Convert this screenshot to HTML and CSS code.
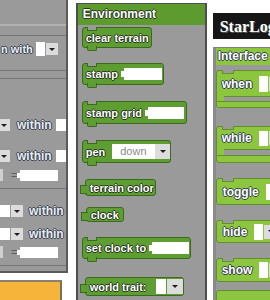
FILE: index.html
```html
<!DOCTYPE html>
<html>
<head>
<meta charset="utf-8">
<link rel="stylesheet" href="styles.css">
</head>
<body>
<div class="stage">
  <div class="left">
    <div class="lpanel">
      <div class="ltop"></div>
      <div class="lsep s1"></div>
      <div class="lrow r1">
        <div class="clip"><span class="ltxt small">n with</span></div>
        <span class="lbox w9"></span><span class="lbtn b12"><i class="tri"></i></span>
      </div>
      <div class="lsep s2"></div>
      <div class="lsep s3"></div>
      <div class="lrow r2">
        <span class="lbtn b10"><i class="tri"></i></span>
        <span class="ltxt m7">within</span>
        <span class="lbox w10 m4"></span>
      </div>
      <div class="lrow r3">
        <span class="lbtn b10"><i class="tri"></i></span>
        <span class="ltxt m7">within</span>
        <span class="lbox w10 m4"></span>
      </div>
      <div class="lrow r4">
        <span class="lbit"></span>
        <span class="leq">=</span>
        <span class="linp"></span>
      </div>
      <div class="lsep s4"></div>
      <div class="lrow r5">
        <span class="lbox w10"></span><span class="lbtn b12"><i class="tri"></i></span>
        <span class="ltxt m6">within</span>
      </div>
      <div class="lrow r6">
        <span class="lbox w10"></span><span class="lbtn b12"><i class="tri"></i></span>
        <span class="ltxt m6">within</span>
      </div>
      <div class="lrow r7">
        <span class="lbit"></span>
        <span class="leq">=</span>
        <span class="linp"></span>
      </div>
      <div class="lsep s5"></div>
    </div>
    <div class="orange"></div>
  </div>

  <div class="mid">
    <div class="mpanel">
      <div class="mhead">Environment</div>
      <div class="mlist">
        <div class="blk stmt b-clear"><span class="t">clear terrain</span></div>
        <div class="blk stmt b-stamp"><span class="t">stamp</span><span class="inp w38"></span></div>
        <div class="blk stmt b-grid"><span class="t">stamp grid</span><span class="inp w36"></span></div>
        <div class="blk stmt b-pen"><span class="t">pen</span><span class="sel">down</span><span class="btn"><i class="tri"></i></span></div>
        <div class="blk rep b-tcolor"><span class="t">terrain color</span></div>
        <div class="blk rep b-clock"><span class="t">clock</span></div>
        <div class="blk stmt b-setclock"><span class="t">set clock to</span><span class="inp w37"></span></div>
        <div class="blk rep b-trait"><span class="t">world trait:</span><span class="wsel"></span><span class="btn b16"><i class="tri"></i></span></div>
      </div>
    </div>
  </div>

  <div class="right">
    <div class="rhead">StarLogo</div>
    <div class="rpanel">
      <div class="rtitle">Interface</div>
      <div class="rlist">
        <div class="cblk c-when">
          <div class="ctop h26"><span class="t">when</span><span class="rbox h16"></span><span class="rbtn"><i class="tri"></i></span></div>
          <div class="cgap g5"></div>
          <div class="cbot h7"></div>
        </div>
        <div class="cblk c-while">
          <div class="ctop h23"><span class="t">while</span><span class="rbox h15"></span><span class="rbtn"><i class="tri"></i></span></div>
          <div class="cgap g6"></div>
          <div class="cbot h8"></div>
        </div>
        <div class="rblk r-toggle"><span class="t">toggle</span><span class="rbox h16"></span><span class="rbtn"><i class="tri"></i></span></div>
        <div class="rblk r-hide"><span class="t">hide</span><span class="rbox h16"></span><span class="rbtn"><i class="tri"></i></span></div>
        <div class="rblk r-show"><span class="t">show</span><span class="rbox h16"></span><span class="rbtn"><i class="tri"></i></span></div>
        <div class="rblk r-next"></div>
      </div>
    </div>
  </div>
</div>
</body>
</html>
```

FILE: styles.css
```css
* { box-sizing: border-box; }
html, body { margin: 0; padding: 0; background: #fff; }
body { font-family: "Liberation Sans", Arial, sans-serif; }

.stage {
  display: flex;
  align-items: flex-start;
  width: 270px;
  height: 300px;
  overflow: hidden;
}

.tri {
  display: block;
  width: 0;
  height: 0;
  border-left: 3px solid transparent;
  border-right: 3px solid transparent;
  border-top: 3px solid #1e1e1e;
}

/* ---------- left column ---------- */
.left {
  flex: 0 0 62px;
  display: flex;
  flex-direction: column;
}
.lpanel {
  height: 273px;
  background: #9a9a9a;
  border-right: 2px solid #5a5a5a;
  border-bottom: 2px solid #5a5a5a;
  display: flex;
  flex-direction: column;
  overflow: hidden;
}
.ltop { height: 26px; border-bottom: 2px solid #b2b2b2; flex: none; }
.lsep { height: 1px; background: #767676; flex: none; }
.s1 { margin-top: 9px; }
.s2 { margin-top: 14px; }
.s3 { margin-top: 7px; }
.s4 { margin-top: 7px; }
.s5 { margin-top: 7px; }

.lrow {
  display: flex;
  align-items: center;
  height: 12px;
  flex: none;
}
.r1 { margin-top: 6px; height: 14px; }
.r2 { margin-top: 40px; }
.r3 { margin-top: 19px; }
.r4 { margin-top: 7px; }
.r5 { margin-top: 16px; }
.r6 { margin-top: 11px; }
.r7 { margin-top: 6px; }

.clip {
  width: 33px;
  padding-left: 1px;
  display: flex;
  justify-content: flex-start;
  white-space: nowrap;
  flex: none;
}
.ltxt {
  font-size: 12px;
  font-weight: bold;
  color: #e9eef6;
  white-space: nowrap;
  line-height: 12px;
  text-shadow: 1px 0 0 #3c4350, -1px 0 0 #3c4350, 0 1px 0 #3c4350, 0 -1px 0 #3c4350;
}
.ltxt.small { font-size: 11px; }
.m7 { margin-left: 7px; }
.m6 { margin-left: 6px; }
.m4 { margin-left: 4px; }
.lbox { background: #fff; height: 14px; flex: none; }
.r1 .lbox { margin-left: 3px; }
.w9 { width: 9px; }
.w10 { width: 10px; height: 12px; }
.lbtn {
  background: #dcdcdc;
  height: 12px;
  display: flex;
  align-items: center;
  justify-content: center;
  flex: none;
  margin-left: 1px;
}
.b10 { width: 10px; margin-left: 0; justify-content: flex-start; padding-left: 1px; }
.b12 { width: 12px; }
.lbit { width: 3px; height: 12px; background: #cfcfcf; flex: none; }
.leq { margin-left: 8px; font-size: 11px; color: #5d5d5d; line-height: 12px; width: 5px; }
.linp { margin-left: 4px; width: 38px; height: 11px; background: #fff; position: relative; }
.linp::before {
  content: "";
  position: absolute;
  left: -3px;
  top: 3px;
  width: 3px;
  height: 5px;
  background: #fff;
}

.orange {
  margin-top: 7px;
  width: 62px;
  height: 22px;
  background: #f6b43a;
  border-top: 2px solid #8c8070;
  border-right: 2px solid #7a7060;
}

/* ---------- middle column ---------- */
.mid {
  flex: 0 0 131px;
  margin-left: 8px;
}
.mpanel {
  margin-top: 3px;
  height: 297px;
  background: #9a9a9a;
  border-left: 2px solid #4e4e4e;
  border-right: 2px solid #4e4e4e;
  border-top: 1px solid #4e4e4e;
}
.mhead {
  height: 21px;
  background: #5d9b2f;
  color: #fff;
  font-size: 12px;
  font-weight: bold;
  line-height: 21px;
  padding-left: 5px;
  text-shadow: 1px 0 0 #27361c, -1px 0 0 #27361c, 0 1px 0 #27361c, 0 -1px 0 #27361c;
}
.mlist {
  display: flex;
  flex-direction: column;
  align-items: flex-start;
  padding-left: 4px;
}
.blk {
  position: relative;
  display: flex;
  align-items: center;
  background: #5e9d31;
  border: 1px solid #3b6a1e;
  border-radius: 3px;
  padding: 0 1px 0 3px;
  flex: none;
}
.blk .t, .rblk .t, .ctop .t {
  font-size: 11px;
  font-weight: bold;
  color: #fff;
  white-space: nowrap;
  line-height: 12px;
  text-shadow: 1px 0 0 #25331b, -1px 0 0 #25331b, 0 1px 0 #25331b, 0 -1px 0 #25331b;
}
.stmt::before {
  content: "";
  position: absolute;
  top: -1px;
  left: 4px;
  width: 8px;
  height: 3px;
  background: #9a9a9a;
  border: 1px solid #3b6a1e;
  border-top: none;
}
.stmt::after {
  content: "";
  position: absolute;
  bottom: -4px;
  left: 4px;
  width: 8px;
  height: 4px;
  background: #5e9d31;
  border: 1px solid #3b6a1e;
  border-top: none;
  border-radius: 0 0 2px 2px;
}
.rep { padding-left: 4px; }
.rep::before {
  content: "";
  position: absolute;
  left: -6px;
  top: 50%;
  margin-top: -3px;
  width: 6px;
  height: 7px;
  background: #5e9d31;
  border: 1px solid #3b6a1e;
  border-right: none;
}

.b-clear { margin-top: 2px; height: 21px; padding-right: 2px; }
.b-stamp { margin-top: 15px; height: 22px; }
.b-grid { margin-top: 16px; height: 23px; padding-right: 2px; }
.b-pen { margin-top: 16px; height: 23px; padding-right: 0; }
.b-tcolor { margin-top: 16px; height: 17px; margin-left: 3px; padding-right: 1px; }
.b-clock { margin-top: 11px; height: 15px; margin-left: 4px; padding-right: 4px; }
.b-setclock { margin-top: 15px; height: 22px; padding-right: 1px; }
.b-trait { margin-top: 18px; height: 19px; margin-left: 3px; padding-right: 0; }

.inp {
  position: relative;
  margin-left: 6px;
  height: 12px;
  background: #fff;
  flex: none;
}
.inp::before {
  content: "";
  position: absolute;
  left: -3px;
  top: 3px;
  width: 3px;
  height: 6px;
  background: #fff;
}
.w38 { width: 38px; }
.w36 { width: 36px; }
.w37 { width: 37px; }
.sel {
  margin-left: 7px;
  width: 43px;
  height: 15px;
  background: #fff;
  font-size: 11px;
  line-height: 15px;
  color: #8a8a8a;
  padding-left: 8px;
  flex: none;
}
.btn {
  width: 15px;
  height: 15px;
  background: #dcdcdc;
  display: flex;
  align-items: center;
  justify-content: center;
  flex: none;
}
.b16 { width: 16px; margin-left: 1px; }
.wsel { margin-left: 9px; width: 10px; height: 15px; background: #fff; flex: none; }

/* ---------- right column ---------- */
.right {
  flex: 0 0 200px;
  margin-left: 6px;
}
.rhead {
  margin-top: 13px;
  height: 26px;
  background: #161616;
  color: #fff;
  font-family: "Liberation Serif", "Times New Roman", serif;
  font-size: 16px;
  font-weight: bold;
  line-height: 27px;
  padding-left: 7px;
  white-space: nowrap;
  text-shadow: 1px 1px 0 #555;
}
.rpanel {
  margin-top: 8px;
  height: 260px;
  background: #9a9a9a;
  border-left: 3px solid #8a8a8a;
  border-top: 1px solid #7c7c7c;
}
.rtitle {
  height: 17px;
  background: #8cc63f;
  color: #fff;
  font-size: 12px;
  font-weight: bold;
  line-height: 17px;
  padding-left: 2px;
  text-shadow: 1px 0 0 #34404a, -1px 0 0 #34404a, 0 1px 0 #34404a, 0 -1px 0 #34404a;
}
.rlist {
  display: flex;
  flex-direction: column;
}
.rlist .t {
  font-size: 12px !important;
  text-shadow: 1px 0 0 #34404a, -1px 0 0 #34404a, 0 1px 0 #34404a, 0 -1px 0 #34404a !important;
}
.cblk { display: flex; flex-direction: column; width: 120px; flex: none; }
.ctop, .rblk {
  position: relative;
  display: flex;
  align-items: center;
  background: #8cc63f;
  border: 1px solid #62902e;
  padding-left: 5px;
  width: 120px;
  flex: none;
}
.ctop { border-radius: 3px 0 0 0; border-bottom: none; }
.rblk { border-radius: 3px; }
.ctop::before, .rblk::before {
  content: "";
  position: absolute;
  top: -1px;
  left: 5px;
  width: 10px;
  height: 3px;
  background: #9a9a9a;
  border: 1px solid #62902e;
  border-top: none;
}
.r-next::before { display: none; }
.cgap {
  border-left: 8px solid #8cc63f;
  position: relative;
}
.cgap::before {
  content: "";
  position: absolute;
  left: -8px;
  top: 0;
  bottom: 0;
  width: 1px;
  background: #62902e;
}
.cgap::after {
  content: "";
  position: absolute;
  left: 0;
  top: 0;
  width: 120px;
  height: 1px;
  background: #62902e;
}
.cbot {
  background: #8cc63f;
  border: 1px solid #62902e;
  border-radius: 0 0 0 3px;
}
.g5 { height: 5px; }
.g6 { height: 6px; }
.h26 { height: 26px; }
.h23 { height: 23px; }
.h7 { height: 7px; }
.h8 { height: 8px; }
.c-when { margin-top: 5px; }
.c-while { margin-top: 18px; }
.r-toggle { margin-top: 15px; height: 27px; padding-left: 6px; }
.r-hide { margin-top: 15px; height: 23px; padding-left: 6px; }
.r-show { margin-top: 15px; height: 24px; }
.r-next { margin-top: 8px; height: 20px; }
.rbox { margin-left: 7px; width: 9px; background: #fff; flex: none; }
.h16 { height: 16px; }
.h15 { height: 15px; }
.rbtn {
  margin-left: 1px;
  width: 14px;
  height: 14px;
  background: #dcdcdc;
  display: flex;
  align-items: center;
  justify-content: center;
  flex: none;
}
```
